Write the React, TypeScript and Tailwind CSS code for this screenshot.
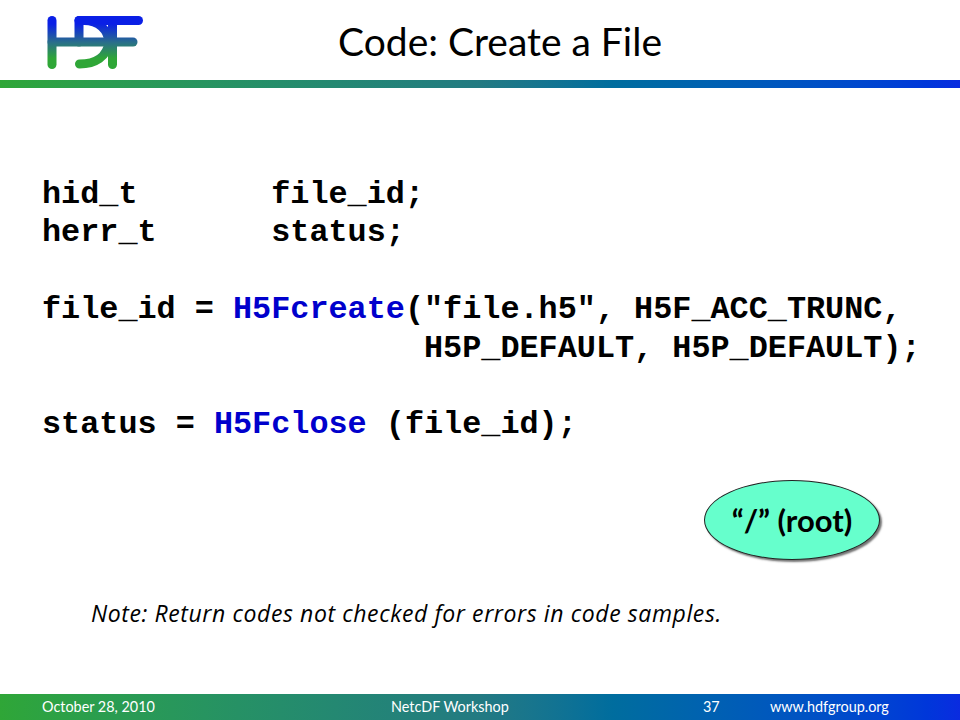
const logoStrokes = [
  "M52 20.5V64.5",
  "M52 42H112",
  "M79 20.5H138.5",
  "M79 20.5V42",
  "M112.5 20.5V64.5",
  "M112 42H133",
  "M79.5 64C95 64 107 57 109 42C108 30 99 20.5 84 20.5",
];

function HdfLogo() {
  return (
    <svg width="200" height="80" viewBox="0 0 200 80" className="shrink-0">
      <defs>
        <linearGradient id="logoFill" gradientUnits="userSpaceOnUse" x1="0" y1="16" x2="0" y2="69">
          <stop offset="0.15" stopColor="#0a1fe6" />
          <stop offset="0.5" stopColor="#2a6f8a" />
          <stop offset="0.8" stopColor="#2fa637" />
        </linearGradient>
      </defs>
      {logoStrokes.map((d) => (
        <path key={d} d={d} fill="none" stroke="url(#logoFill)" strokeWidth="9" strokeLinecap="round" />
      ))}
    </svg>
  );
}

export default function App() {
  return (
    <div className="w-[960px] h-[720px] bg-white flex flex-col overflow-hidden font-['Lato',sans-serif] text-black">
      {/* Cabecera */}
      <div className="h-[80px] flex">
        <HdfLogo />
        <h1 className="w-[600px] text-center text-[39px] leading-[83px] font-normal">Code: Create a File</h1>
      </div>
      <div className="h-[8px] bg-gradient-to-r from-[#2fa637] via-[#237a82] to-[#0a2be0]" />

      {/* Codigo */}
      <pre className="mt-[88px] ml-[42px] h-[304px] font-['Liberation_Mono',monospace] font-bold text-[31.83px] leading-[38.4px]">
        {"hid_t       file_id;\nherr_t      status;\n\nfile_id = "}
        <span className="text-[#0000cc]">H5Fcreate</span>
        {'("file.h5", H5F_ACC_TRUNC,\n                    H5P_DEFAULT, H5P_DEFAULT);\n\nstatus = '}
        <span className="text-[#0000cc]">H5Fclose</span>
        {" (file_id);"}
      </pre>

      {/* Ovalo */}
      <div className="flex justify-end pr-[80px]">
        <div className="w-[176px] h-[80px] rounded-[50%] bg-[#66ffcc] border border-[#222] shadow-[2px_2px_2px_rgba(0,0,0,0.55)] flex items-center justify-center text-[31px] font-bold">
          “/” (root)
        </div>
      </div>

      {/* Nota */}
      <p className="mt-[39px] ml-[91px] font-['Open_Sans',sans-serif] text-[23px] leading-[28px] tracking-[0.6px] italic">
        Note: Return codes not checked for errors in code samples.
      </p>

      {/* Pie */}
      <div className="mt-auto h-[26px] bg-gradient-to-r from-[#2fa637] via-[#237a82] to-[#0a2be0] flex items-center text-white text-[14.4px]">
        <span className="ml-[42px] w-[349px]">October 28, 2010</span>
        <span className="w-[312px]">NetcDF Workshop</span>
        <span className="w-[67px]">37</span>
        <span>www.hdfgroup.org</span>
      </div>
    </div>
  );
}
